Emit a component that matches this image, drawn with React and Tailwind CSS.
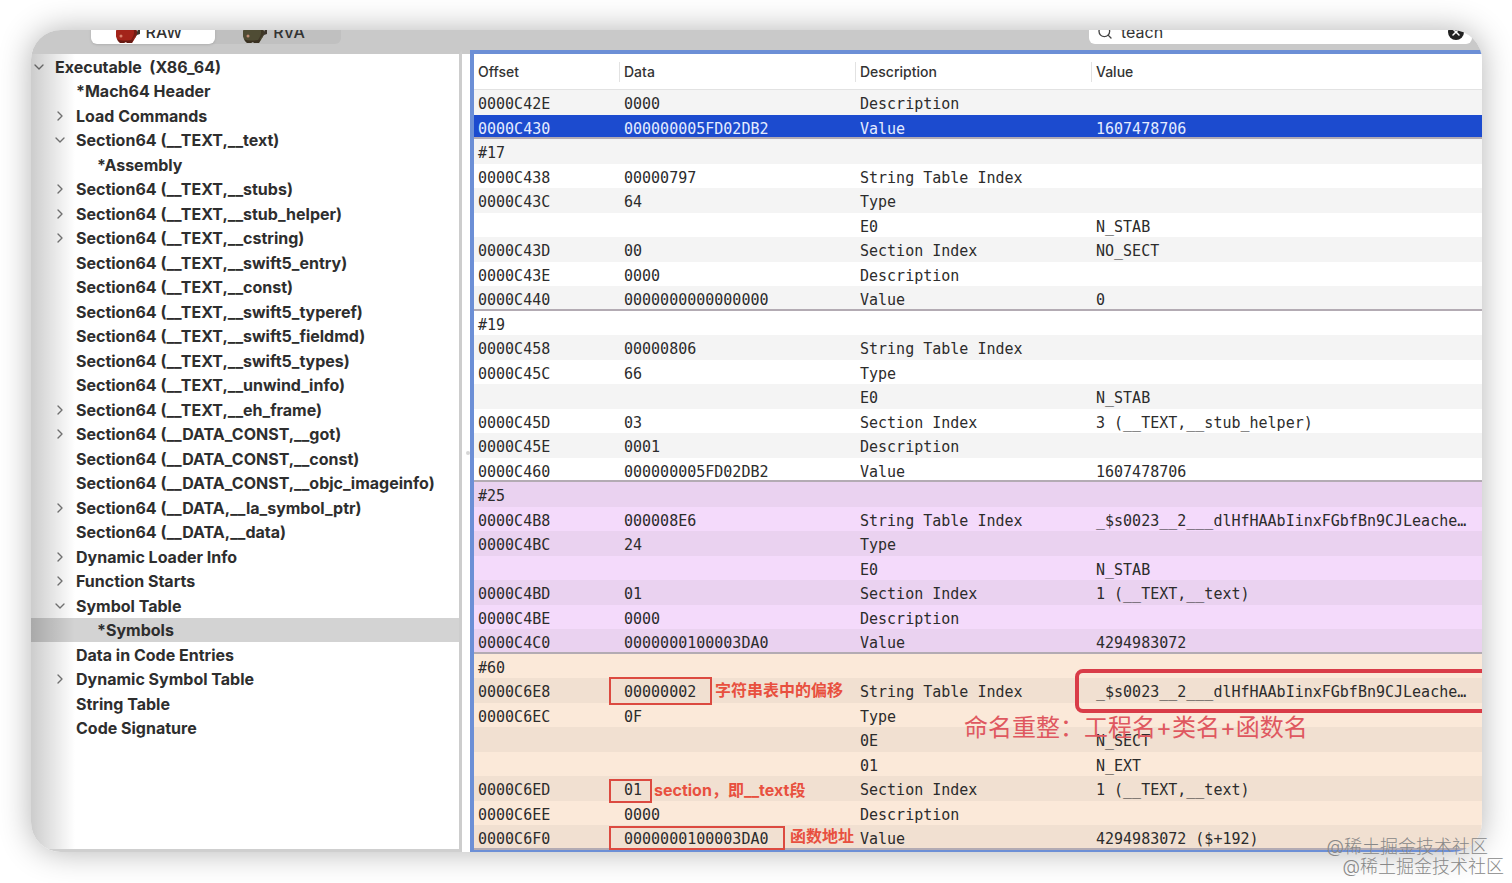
import { ChevronDown, ChevronRight, Search, X } from 'lucide-react';
import { clsx } from 'clsx';

const tree = [
  { label: 'Executable  (X86_64)', level: 0, open: true },
  { label: '*Mach64 Header', level: 1 },
  { label: 'Load Commands', level: 1, open: false },
  { label: 'Section64 (__TEXT,__text)', level: 1, open: true },
  { label: '*Assembly', level: 2 },
  { label: 'Section64 (__TEXT,__stubs)', level: 1, open: false },
  { label: 'Section64 (__TEXT,__stub_helper)', level: 1, open: false },
  { label: 'Section64 (__TEXT,__cstring)', level: 1, open: false },
  { label: 'Section64 (__TEXT,__swift5_entry)', level: 1 },
  { label: 'Section64 (__TEXT,__const)', level: 1 },
  { label: 'Section64 (__TEXT,__swift5_typeref)', level: 1 },
  { label: 'Section64 (__TEXT,__swift5_fieldmd)', level: 1 },
  { label: 'Section64 (__TEXT,__swift5_types)', level: 1 },
  { label: 'Section64 (__TEXT,__unwind_info)', level: 1 },
  { label: 'Section64 (__TEXT,__eh_frame)', level: 1, open: false },
  { label: 'Section64 (__DATA_CONST,__got)', level: 1, open: false },
  { label: 'Section64 (__DATA_CONST,__const)', level: 1 },
  { label: 'Section64 (__DATA_CONST,__objc_imageinfo)', level: 1 },
  { label: 'Section64 (__DATA,__la_symbol_ptr)', level: 1, open: false },
  { label: 'Section64 (__DATA,__data)', level: 1 },
  { label: 'Dynamic Loader Info', level: 1, open: false },
  { label: 'Function Starts', level: 1, open: false },
  { label: 'Symbol Table', level: 1, open: true },
  { label: '*Symbols', level: 2, selected: true },
  { label: 'Data in Code Entries', level: 1 },
  { label: 'Dynamic Symbol Table', level: 1, open: false },
  { label: 'String Table', level: 1 },
  { label: 'Code Signature', level: 1 },
];

const mangled = '_$s0023__2___dlHfHAAbIinxFGbfBn9CJLeache…';

const groups = [
  {
    tone: 'plain',
    rows: [
      ['0000C42E', '0000', 'Description', ''],
      ['0000C430', '000000005FD02DB2', 'Value', '1607478706'],
    ],
  },
  {
    tone: 'plain',
    rows: [
      ['#17', '', '', ''],
      ['0000C438', '00000797', 'String Table Index', ''],
      ['0000C43C', '64', 'Type', ''],
      ['', '', 'E0', 'N_STAB'],
      ['0000C43D', '00', 'Section Index', 'NO_SECT'],
      ['0000C43E', '0000', 'Description', ''],
      ['0000C440', '0000000000000000', 'Value', '0'],
    ],
  },
  {
    tone: 'plain',
    rows: [
      ['#19', '', '', ''],
      ['0000C458', '00000806', 'String Table Index', ''],
      ['0000C45C', '66', 'Type', ''],
      ['', '', 'E0', 'N_STAB'],
      ['0000C45D', '03', 'Section Index', '3 (__TEXT,__stub_helper)'],
      ['0000C45E', '0001', 'Description', ''],
      ['0000C460', '000000005FD02DB2', 'Value', '1607478706'],
    ],
  },
  {
    tone: 'purple',
    rows: [
      ['#25', '', '', ''],
      ['0000C4B8', '000008E6', 'String Table Index', mangled],
      ['0000C4BC', '24', 'Type', ''],
      ['', '', 'E0', 'N_STAB'],
      ['0000C4BD', '01', 'Section Index', '1 (__TEXT,__text)'],
      ['0000C4BE', '0000', 'Description', ''],
      ['0000C4C0', '0000000100003DA0', 'Value', '4294983072'],
    ],
  },
  {
    tone: 'orange',
    rows: [
      ['#60', '', '', ''],
      ['0000C6E8', '00000002', 'String Table Index', mangled],
      ['0000C6EC', '0F', 'Type', ''],
      ['', '', '0E', 'N_SECT'],
      ['', '', '01', 'N_EXT'],
      ['0000C6ED', '01', 'Section Index', '1 (__TEXT,__text)'],
      ['0000C6EE', '0000', 'Description', ''],
      ['0000C6F0', '0000000100003DA0', 'Value', '4294983072 ($+192)'],
    ],
  },
];

// Stripes run over the whole table, so the parity comes from the flat index.
const tones = {
  plain: ['bg-[#f4f4f4]', 'bg-white'],
  purple: ['bg-[#ead2f0]', 'bg-[#f4dafb]'],
  orange: ['bg-[#f1e0d1]', 'bg-[#fbe9d9]'],
};

const rows = groups
  .flatMap((group) =>
    group.rows.map((cells, i) => ({
      cells,
      tone: group.tone,
      last: i === group.rows.length - 1,
    })),
  )
  .map((row, i) => ({
    ...row,
    selected: row.cells[0] === '0000C430',
    bg: tones[row.tone][i % 2],
  }));

function Pot({ className }) {
  return (
    <svg viewBox="0 0 24 24" className={className} aria-hidden="true">
      <path d="M17 13l4-1 1-3 2 1v4l-3 1-2 3-3 1z" fill="#3d352c" />
      <path d="M0 11C1 5 19 5 21 11c0 3-1 6-3 9l-2 3h-5l-1-1-2 1H4l-2-2C0 18-1 14 0 11z" fill="currentColor" />
      <path d="M1 19c4 2 12 2 17 0l-2 4h-5l-1-1-2 1H4l-2-2z" fill="#1f0f0c" fillOpacity="0.45" />
      <path d="M17 8c2 4 1 8-2 12 4-2 6-6 6-9z" fill="#1f0f0c" fillOpacity="0.35" />
      <circle cx="5" cy="16" r="1.5" fill="#f0a890" fillOpacity="0.7" />
    </svg>
  );
}

function Toolbar() {
  return (
    <header className="flex h-5 items-end justify-between bg-[#c9c9c9] pr-2.5 pb-1.5 pl-[60px]">
      <div className="flex shrink-0 rounded-md bg-[#c0c0c0]">
        <button className="flex h-6 w-[124px] items-center justify-center gap-1.5 rounded-md bg-white pr-2 text-base font-medium text-[#333] shadow-sm">
          <Pot className="h-6 w-6 text-[#a3241a]" />
          RAW
        </button>
        <button className="flex h-6 w-[126px] items-center justify-center gap-1.5 pr-2 text-base font-medium text-[#333]">
          <Pot className="h-6 w-6 text-[#4f4c34]" />
          RVA
        </button>
      </div>
      <label className="flex h-6 w-[383px] shrink-0 items-center gap-2 rounded-md bg-white px-2">
        <Search className="h-4 w-4 text-[#444]" />
        <input
          aria-label="Search"
          defaultValue="teach"
          className="min-w-0 flex-1 text-base text-[#333] outline-none"
        />
        <button aria-label="Clear" className="rounded-full bg-[#222] p-0.5 text-white">
          <X className="h-3 w-3" strokeWidth={3} />
        </button>
      </label>
    </header>
  );
}

function TreeItem({ item }) {
  const Chevron = item.open ? ChevronDown : ChevronRight;

  return (
    <li
      className={clsx(
        'flex items-center gap-2 whitespace-pre odd:h-[25px] even:h-6',
        item.level === 1 && 'pl-[21px]',
        item.level === 2 && 'pl-[42px]',
        item.selected && 'bg-[#d3d3d3]',
      )}
    >
      <span className="flex w-4 shrink-0 justify-center text-[#777]">
        {item.open !== undefined && <Chevron className="h-4 w-4" />}
      </span>
      {item.label}
    </li>
  );
}

function Sidebar() {
  return (
    <aside className="flex w-[439px] shrink-0 bg-white">
      <div className="relative flex-1 border-t-4 border-r-3 border-b-3 border-t-[#c9c9c9] border-r-[#cdcdcd] border-b-[#cfcfcf]">
        <ul className="text-base font-bold text-[#2e2e2e]">
          {tree.map((item) => (
            <TreeItem key={item.label} item={item} />
          ))}
        </ul>
        <div className="pointer-events-none absolute inset-y-0 left-0 w-11 bg-linear-to-r from-black/20 to-transparent" />
      </div>
      <div className="flex w-2 items-center border-t-4 border-[#c9c9c9]">
        <span className="ml-1 h-1 w-1 rounded-full bg-[#d6d6d6]" />
      </div>
    </aside>
  );
}

function SymbolTable() {
  return (
    <table className="w-full table-fixed text-left">
      <colgroup>
        <col className="w-[146px]" />
        <col className="w-[236px]" />
        <col className="w-[236px]" />
        <col />
      </colgroup>
      <thead>
        <tr className="h-9 bg-white text-sm text-[#333] shadow-[inset_0_-1px_0_#e2e2e2]">
          {['Offset', 'Data', 'Description', 'Value'].map((name) => (
            <th key={name} className="group p-0 font-medium">
              <span className="block border-r border-[#e2e2e2] pl-1 group-last:border-0">
                {name}
              </span>
            </th>
          ))}
        </tr>
      </thead>
      <tbody className="font-['DejaVu_Sans_Mono',monospace] text-[15px] leading-5 text-[#2c2c2c]">
        {rows.map((row, i) => (
          <tr
            key={i}
            className={clsx(
              'odd:h-[25px] even:h-6',
              row.selected ? 'bg-[#1c4bcf] text-[#e4ebff]' : row.bg,
              row.last && 'shadow-[inset_0_-2px_0_#b3abb3]',
            )}
          >
            {row.cells.map((cell, j) => (
              <td key={j} className="truncate p-0 pt-1 pl-1 align-top">
                {cell}
              </td>
            ))}
          </tr>
        ))}
      </tbody>
    </table>
  );
}

function Annotations() {
  return (
    <div className="pointer-events-none absolute inset-0 overflow-hidden text-base leading-5 font-bold text-[#e8503f]">
      <div className="absolute top-[623px] left-[135px] h-7 w-[103px] border-2 border-[#dc4a40]" />
      <p className="absolute top-[626px] left-[241px]">字符串表中的偏移</p>
      <div className="absolute top-[725px] left-[135px] h-6 w-[43px] border-2 border-[#dc4a40]" />
      <p className="absolute top-[726px] left-[180px]">section，即__text段</p>
      <div className="absolute top-[772px] left-[135px] h-6 w-[176px] border-2 border-[#dc4a40]" />
      <p className="absolute top-[772px] left-[316px]">函数地址</p>
      <div className="absolute top-[615px] -right-2 left-[601px] h-11 rounded-lg border-4 border-[#d93c48]" />
      <p className="absolute top-[658px] left-[490px] text-2xl leading-8 font-normal text-[#df5860]">
        命名重整：工程名+类名+函数名
      </p>
    </div>
  );
}

export default function App() {
  return (
    <div className="relative min-h-screen bg-white pt-[30px] pr-[30px] pb-[30px] pl-[31px] font-[Inter,'Noto_Sans_CJK_SC',sans-serif]">
      <div className="overflow-hidden rounded-[30px] bg-white shadow-[0_0_32px_rgba(0,0,0,0.3)]">
        <Toolbar />
        <div className="flex">
          <Sidebar />
          <main className="relative min-w-0 flex-1 border-t-4 border-b-2 border-l-4 border-[#6c8fd6]">
            <SymbolTable />
            <Annotations />
          </main>
        </div>
      </div>
      <div className="absolute right-2 bottom-1.5 text-lg leading-5 font-light text-[#888]">
        <p className="pr-4">@稀土掘金技术社区</p>
        <p className="pl-4">@稀土掘金技术社区</p>
      </div>
    </div>
  );
}
